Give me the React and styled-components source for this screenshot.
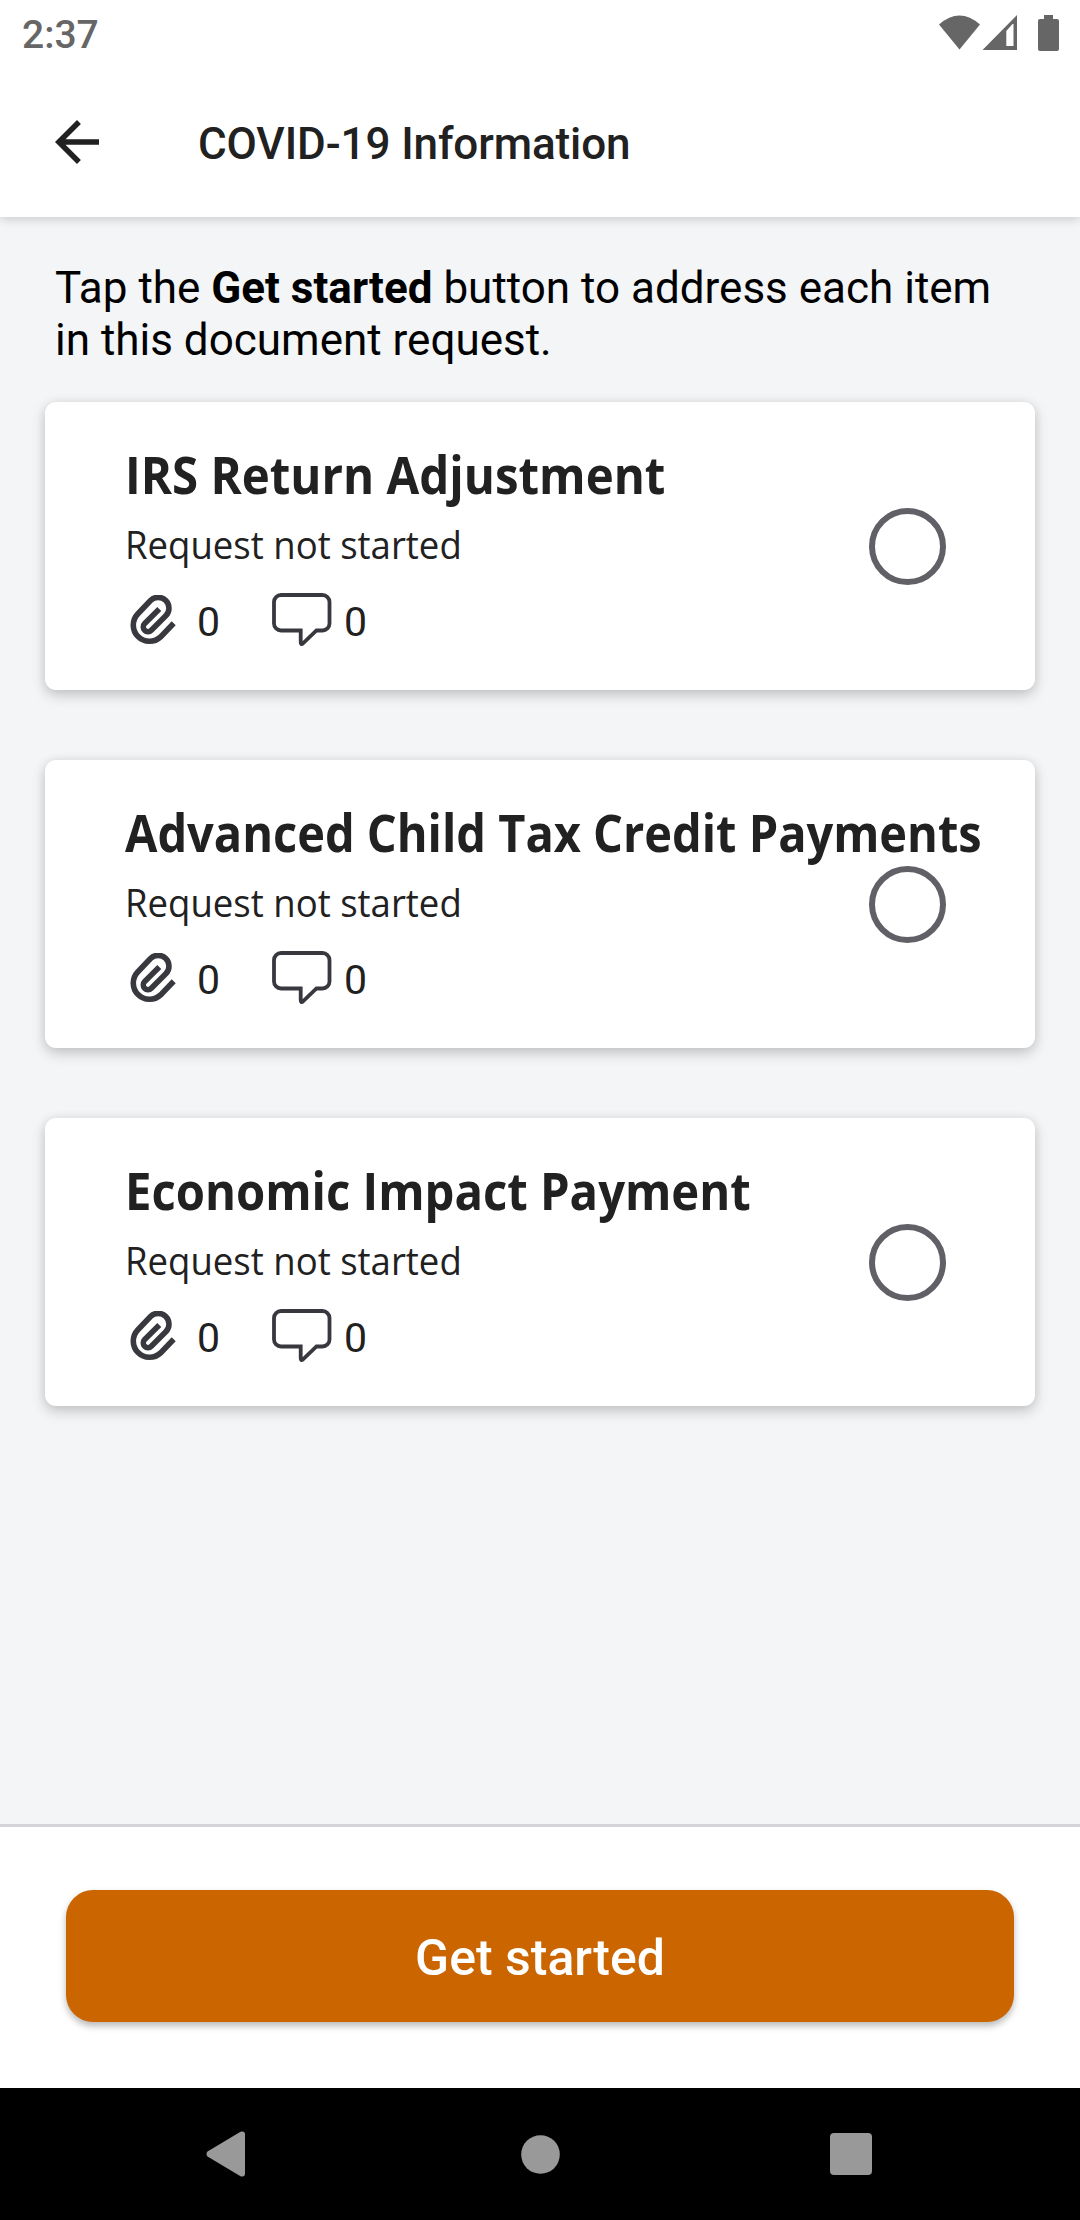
import React from 'react'
import styled, { createGlobalStyle } from 'styled-components'

const GlobalStyle = createGlobalStyle`
  * {
    box-sizing: border-box;
  }

  body {
    margin: 0;
    font-family: Roboto, sans-serif;
    background: #f3f5f7;
  }
`

const Screen = styled.div`
  display: flex;
  flex-direction: column;
  width: 1080px;
  height: 2220px;
  overflow: hidden;
`

const Header = styled.header`
  height: 217px;
  background: #fff;
  box-shadow: 0 2px 10px rgba(0, 0, 0, 0.18);
`

const StatusBar = styled.div`
  display: flex;
  justify-content: space-between;
  height: 66px;
  padding: 0 21px 0 22px;
`

const Clock = styled.span`
  font-size: 39px;
  font-weight: 500;
  line-height: 70px;
  color: #666;
`

const StatusIcons = styled.div`
  display: flex;
  padding-top: 15px;

  svg {
    display: block;
  }
`

const AppBar = styled.div`
  display: flex;
  align-items: center;
  height: 151px;
  padding-left: 44px;
`

const BackButton = styled.button`
  width: 66px;
  height: 66px;
  padding: 0;
  border: 0;
  background: none;

  svg {
    display: block;
  }
`

const Title = styled.h1`
  margin: 4px 0 0 88px;
  font-size: 44px;
  font-weight: 500;
  line-height: 52px;
  letter-spacing: -0.1px;
  color: #212121;
`

const Content = styled.main`
  flex: 1;
  padding: 45px 45px 0;
`

const Intro = styled.p`
  margin: 0 0 36px;
  padding-left: 10px;
  font-size: 44px;
  line-height: 52px;
  white-space: nowrap;
  color: #000;
`

const CardList = styled.div`
  display: flex;
  flex-direction: column;
  gap: 70px;
`

const Card = styled.section`
  display: flex;
  align-items: center;
  height: 288px;
  padding: 0 89px 0 80px;
  border-radius: 11px;
  background: #fff;
  box-shadow: 0 5px 14px rgba(0, 0, 0, 0.2), 0 0 10px rgba(0, 0, 0, 0.06);
`

const CardBody = styled.div`
  flex: 1;
  min-width: 0;
  height: 288px;
  padding-top: 37px;
  font-family: 'Open Sans', sans-serif;
  white-space: nowrap;
  color: #212121;
`

const CardTitle = styled.h2`
  margin: 0 0 9px;
  font-size: 52px;
  font-weight: 700;
  line-height: 70px;
  transform: scaleX(${({ $condense }) => $condense});
  transform-origin: left;
`

const CardStatus = styled.p`
  margin: 0 0 20px;
  font-size: 38.5px;
  line-height: 52px;
  transform: scaleX(0.949);
  transform-origin: left;
`

const Counters = styled.div`
  display: flex;
  align-items: center;
  height: 60px;
  padding-left: 5px;
`

const Counter = styled.span`
  width: ${({ width }) => width}px;
  margin-left: ${({ $gap }) => $gap}px;
  padding-top: 3px;
  font-family: Roboto, sans-serif;
  font-size: 41px;
  line-height: 60px;
`

const Radio = styled.div`
  flex: none;
  width: 77px;
  height: 77px;
  border: 6px solid #616067;
  border-radius: 50%;
`

const Footer = styled.footer`
  height: 264px;
  padding: 63px 66px 0;
  border-top: 3px solid #d4d5d8;
  background: #fff;
`

const StartButton = styled.button`
  display: block;
  width: 948px;
  height: 132px;
  padding: 4px 0 0;
  border: 0;
  border-radius: 27px;
  background: #ca6500;
  box-shadow: 0 4px 7px rgba(0, 0, 0, 0.28);
  font-family: Roboto, sans-serif;
  font-size: 50px;
  font-weight: 500;
  color: #fff;
`

const NavBar = styled.nav`
  display: flex;
  align-items: center;
  height: 132px;
  padding-left: 206px;
  background: #000;
`

const NavIcon = styled.svg`
  display: block;
  margin-right: ${({ $gap }) => $gap || 0}px;
  fill: #999;
`

const Paperclip = () => (
  <svg width='46' height='51' viewBox='0 0.7 46 51' fill='none'>
    <path
      d='M43.7 29L30.6 42.6A16.2 16.2 0 0 1 7.7 19.7L20.5 6.2A10.8 10.8 0 0 1 35.8 21.5L21.3 36A4.7 4.7 0 0 1 14.7 29.3L29.3 14.7'
      stroke='#38383f'
      strokeWidth='5.6'
    />
  </svg>
)

const Bubble = () => (
  <svg width='60' height='54' viewBox='0 0 60 54' fill='none'>
    <path
      d='M9 2H50.5A7 7 0 0 1 57.5 9V30.5A7 7 0 0 1 50.5 37.5H44.5L30.8 50.6Q28.7 52 28.7 49V37.5H9A7 7 0 0 1 2 30.5V9A7 7 0 0 1 9 2Z'
      stroke='#38383f'
      strokeWidth='3.8'
    />
  </svg>
)

const RequestCard = ({ title, condense, files, comments }) => (
  <Card>
    <CardBody>
      <CardTitle $condense={condense}>{title}</CardTitle>
      <CardStatus>Request not started</CardStatus>
      <Counters>
        <Paperclip />
        <Counter width={75} $gap={21}>
          {files}
        </Counter>
        <Bubble />
        <Counter width={30} $gap={12}>
          {comments}
        </Counter>
      </Counters>
    </CardBody>
    <Radio />
  </Card>
)

const requests = [
  {
    title: 'IRS Return Adjustment',
    condense: 0.912,
    files: 0,
    comments: 0,
  },
  {
    title: 'Advanced Child Tax Credit Payments',
    condense: 0.903,
    files: 0,
    comments: 0,
  },
  {
    title: 'Economic Impact Payment',
    condense: 0.908,
    files: 0,
    comments: 0,
  },
]

const App = () => {
  return (
    <Screen>
      <GlobalStyle />
      <Header>
        <StatusBar>
          <Clock>2:37</Clock>
          <StatusIcons>
            <svg width='120' height='36' viewBox='0 0 120 36' fill='#666'>
              <path d='M0 9.5Q20.5 -8.5 41 9.5L20.5 34.5Z' />
              <path
                fillRule='evenodd'
                d='M43.5 35L78 0V35ZM67.3 16V31H74.5V9H73.5Z'
              />
              <path d='M105 0H114V4H118Q120 4 120 6V34Q120 36 118 36H101Q99 36 99 34V6Q99 4 101 4H105Z' />
            </svg>
          </StatusIcons>
        </StatusBar>
        <AppBar>
          <BackButton aria-label='Back'>
            <svg width='66' height='66' viewBox='0 0 24 24' fill='#212121'>
              <path d='M20 11H7.83l5.59-5.59L12 4l-8 8 8 8 1.41-1.41L7.83 13H20v-2z' />
            </svg>
          </BackButton>
          <Title>COVID-19 Information</Title>
        </AppBar>
      </Header>

      <Content>
        <Intro>
          Tap the <b>Get started</b> button to address each item
          <br />
          in this document request.
        </Intro>
        <CardList>
          {requests.map((request) => (
            <RequestCard key={request.title} {...request} />
          ))}
        </CardList>
      </Content>

      <Footer>
        <StartButton>Get started</StartButton>
      </Footer>

      <NavBar>
        <NavIcon width='40' height='46' $gap={275}>
          <path d='M1.5 20.5L34.5 0.8Q39 -0.5 39 3.5V42.5Q39 46.5 34.5 45.2L1.5 25.5Q-0.5 23 1.5 20.5Z' />
        </NavIcon>
        <NavIcon width='39' height='39' $gap={270}>
          <circle cx='19.5' cy='19.5' r='19.3' />
        </NavIcon>
        <NavIcon width='42' height='42'>
          <rect width='42' height='42' rx='4' />
        </NavIcon>
      </NavBar>
    </Screen>
  )
}

export default App
